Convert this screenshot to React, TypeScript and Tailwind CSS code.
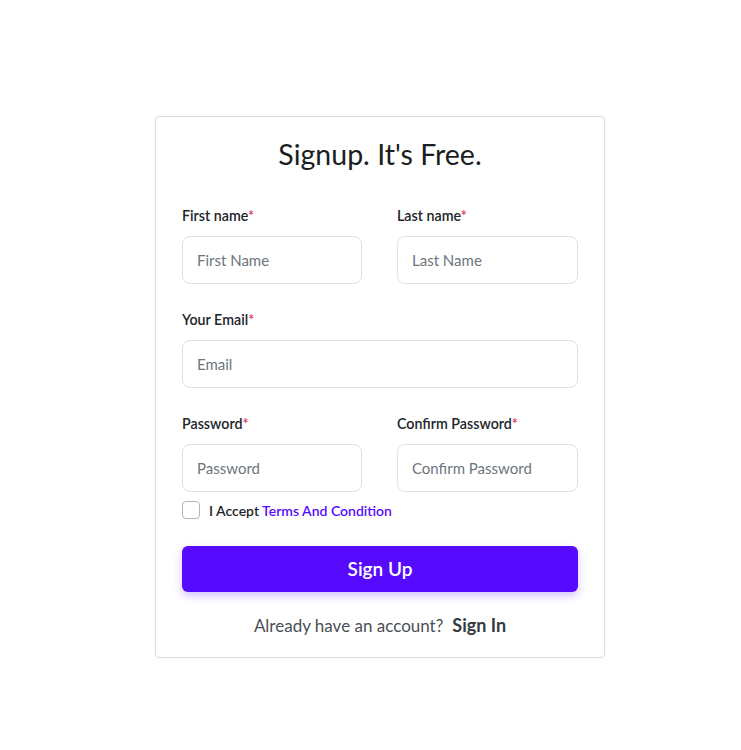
import React from "react";

const Label = ({ children }: { children: React.ReactNode }) => (
  <label className="block text-[14.25px] leading-[20px] font-semibold text-[#212529] mb-[10px]">
    {children}
    <span className="text-[#e4335b]">*</span>
  </label>
);

const Input = ({ placeholder }: { placeholder: string }) => (
  <input
    placeholder={placeholder}
    className="block w-full h-[48px] rounded-[8px] border border-[#dee2e6] px-[14px] text-[15px] text-[#212529] placeholder:text-[#6c757d] outline-none bg-white"
  />
);

export default function App() {
  return (
    <div
      className="min-h-[750px] bg-white flex justify-center pt-[116px] pl-[19px]"
      style={{ fontFamily: "Lato, 'Noto Sans', sans-serif" }}
    >
      <div className="w-[450px] h-[542px] border border-[#dcdcdc] rounded-[4px] shadow-[0_0_3px_rgba(0,0,0,0.06)] px-[26px] pt-[21px]">
        <h1 className="text-center text-[28.5px] leading-[32px] text-[#1a1d21] font-normal">
          Signup. It's Free.
        </h1>
        <div className="grid grid-cols-[180px_180px] justify-between mt-[36px]">
          <div>
            <Label>First name</Label>
            <Input placeholder="First Name" />
          </div>
          <div className="-ml-px">
            <Label>Last name</Label>
            <Input placeholder="Last Name" />
          </div>
        </div>
        <div className="mt-[26px]">
          <Label>Your Email</Label>
          <Input placeholder="Email" />
        </div>
        <div className="grid grid-cols-[180px_180px] justify-between mt-[26px]">
          <div>
            <Label>Password</Label>
            <Input placeholder="Password" />
          </div>
          <div className="-ml-px">
            <Label>Confirm Password</Label>
            <Input placeholder="Confirm Password" />
          </div>
        </div>
        <div className="flex items-center mt-[8px] h-[20px]">
          <span className="w-[18px] h-[18px] rounded-[4px] border border-[#adb5bd] bg-white" />
          <span className="ml-[9px] text-[14px] font-semibold text-[#212529]">
            I Accept <span className="text-[#560bff] font-semibold">Terms And Condition</span>
          </span>
        </div>
        <button className="mt-[26px] w-full h-[46px] rounded-[6px] bg-[#560bff] text-white text-[19px] font-semibold shadow-[0_4px_8px_rgba(86,11,255,0.25)]">
          Sign Up
        </button>
        <div className="mt-[21px] text-center leading-[24px]">
          <span className="text-[17px] text-[#4a4f55]">Already have an account?</span>
          <span className="ml-[9px] text-[18px] font-bold text-[#343a40]">Sign In</span>
        </div>
      </div>
    </div>
  );
}
